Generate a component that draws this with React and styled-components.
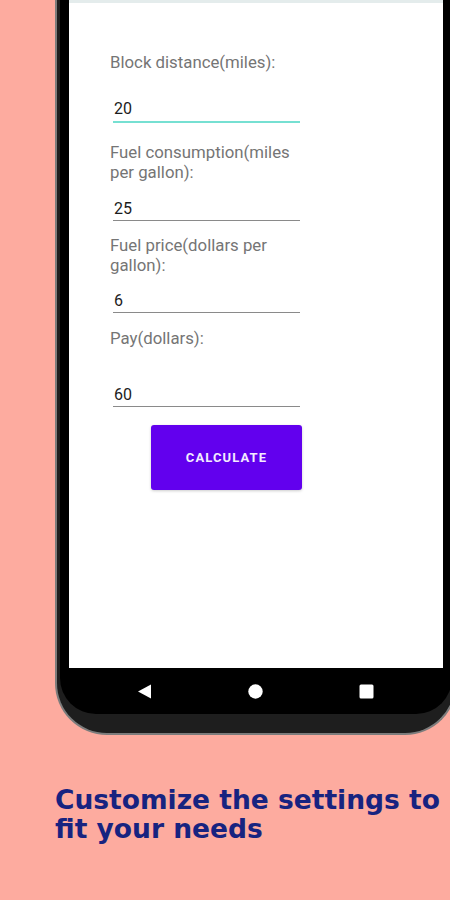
import React from "react";
import styled, { createGlobalStyle } from "styled-components";

const Global = createGlobalStyle`
  html, body { margin: 0; padding: 0; }
  *, *::before, *::after { box-sizing: border-box; }
  body {
    width: 450px;
    height: 900px;
    overflow: hidden;
    background: #fdab9f;
    font-family: Roboto, "Liberation Sans", sans-serif;
  }
`;

const Page = styled.div`
  width: 450px;
  height: 900px;
  overflow: hidden;
  background: #fdab9f;
  display: flex;
  flex-direction: column;
`;

const Frame = styled.div`
  margin-left: 55px;
  width: 402px;
  flex-shrink: 0;
  border: 2px solid #7c7c7c;
  border-top: none;
  border-radius: 0 0 52px 52px;
  background: #1e1e1e;
  padding: 0 3px 19px 3px;
`;

const Bezel = styled.div`
  background: #000;
  border-radius: 0 0 36px 36px;
  padding: 0 9px;
  display: flex;
  flex-direction: column;
`;

const Screen = styled.div`
  background: #fff;
  height: 668px;
  display: flex;
  flex-direction: column;
`;

const TopShade = styled.div`
  height: 3px;
  background: #e4ecec;
`;

const Form = styled.div`
  display: flex;
  flex-direction: column;
  padding: 49px 0 0 41px;
`;

const Field = styled.div`
  display: flex;
  flex-direction: column;
  width: 200px;
  margin-top: ${(p) => p.$top}px;
`;

const Label = styled.div`
  font-size: 16.8px;
  line-height: 20px;
  color: #757575;
  width: 190px;
`;

const Input = styled.div`
  margin-top: ${(p) => p.$gap}px;
  margin-left: 3px;
  width: 187px;
  font-size: 16px;
  line-height: 20px;
  color: #1c1c1c;
  padding: 1px 0 ${(p) => (p.$focused ? 2 : 1)}px 1px;
  border-bottom: ${(p) => (p.$focused ? "2px solid #76e0d2" : "1px solid #8a8a8a")};
`;

const Button = styled.button`
  margin: 18px 0 0 82px;
  width: 151px;
  height: 65px;
  border: none;
  border-radius: 3px;
  background: #6200ee;
  color: #f3ebff;
  font-family: Roboto, "Liberation Sans", sans-serif;
  font-weight: 700;
  font-size: 13px;
  letter-spacing: 1.1px;
  box-shadow: 0 1px 3px rgba(0, 0, 0, 0.2);
  padding: 0;
`;

const NavBar = styled.div`
  height: 46px;
  display: flex;
  align-items: center;
  justify-content: space-between;
  padding: 0 69px 0 68px;
`;

const Title = styled.h1`
  margin: 50px 0 0 55px;
  width: 395px;
  font-family: "DejaVu Sans", "Open Sans", sans-serif;
  font-weight: 700;
  font-size: 26.5px;
  line-height: 29px;
  color: #172380;
  letter-spacing: 0;
`;

const fields = [
  { label: "Block distance(miles):", value: "20", top: 0, gap: 26, focused: true },
  { label: "Fuel consumption(miles per gallon):", value: "25", top: 19, gap: 16 },
  { label: "Fuel price(dollars per gallon):", value: "6", top: 14, gap: 15 },
  { label: "Pay(dollars):", value: "60", top: 15, gap: 36 },
];

export default function App() {
  return (
    <Page>
      <Global />
      <Frame>
        <Bezel>
          <Screen>
            <TopShade />
            <Form>
              {fields.map((f) => (
                <Field key={f.label} $top={f.top}>
                  <Label>{f.label}</Label>
                  <Input $gap={f.gap} $focused={f.focused}>{f.value}</Input>
                </Field>
              ))}
            </Form>
            <Button>CALCULATE</Button>
          </Screen>
          <NavBar>
            <svg width="15" height="15" viewBox="0 0 15 15">
              <path d="M1 7.5 L14 0.5 L14 14.5 Z" fill="#fff" />
            </svg>
            <svg width="15" height="15" viewBox="0 0 15 15">
              <circle cx="7.5" cy="7.5" r="7.2" fill="#fff" />
            </svg>
            <svg width="15" height="15" viewBox="0 0 15 15">
              <rect x="0.5" y="0.5" width="14" height="14" rx="1.5" fill="#fff" />
            </svg>
          </NavBar>
        </Bezel>
      </Frame>
      <Title>Customize the settings to fit your needs</Title>
    </Page>
  );
}
